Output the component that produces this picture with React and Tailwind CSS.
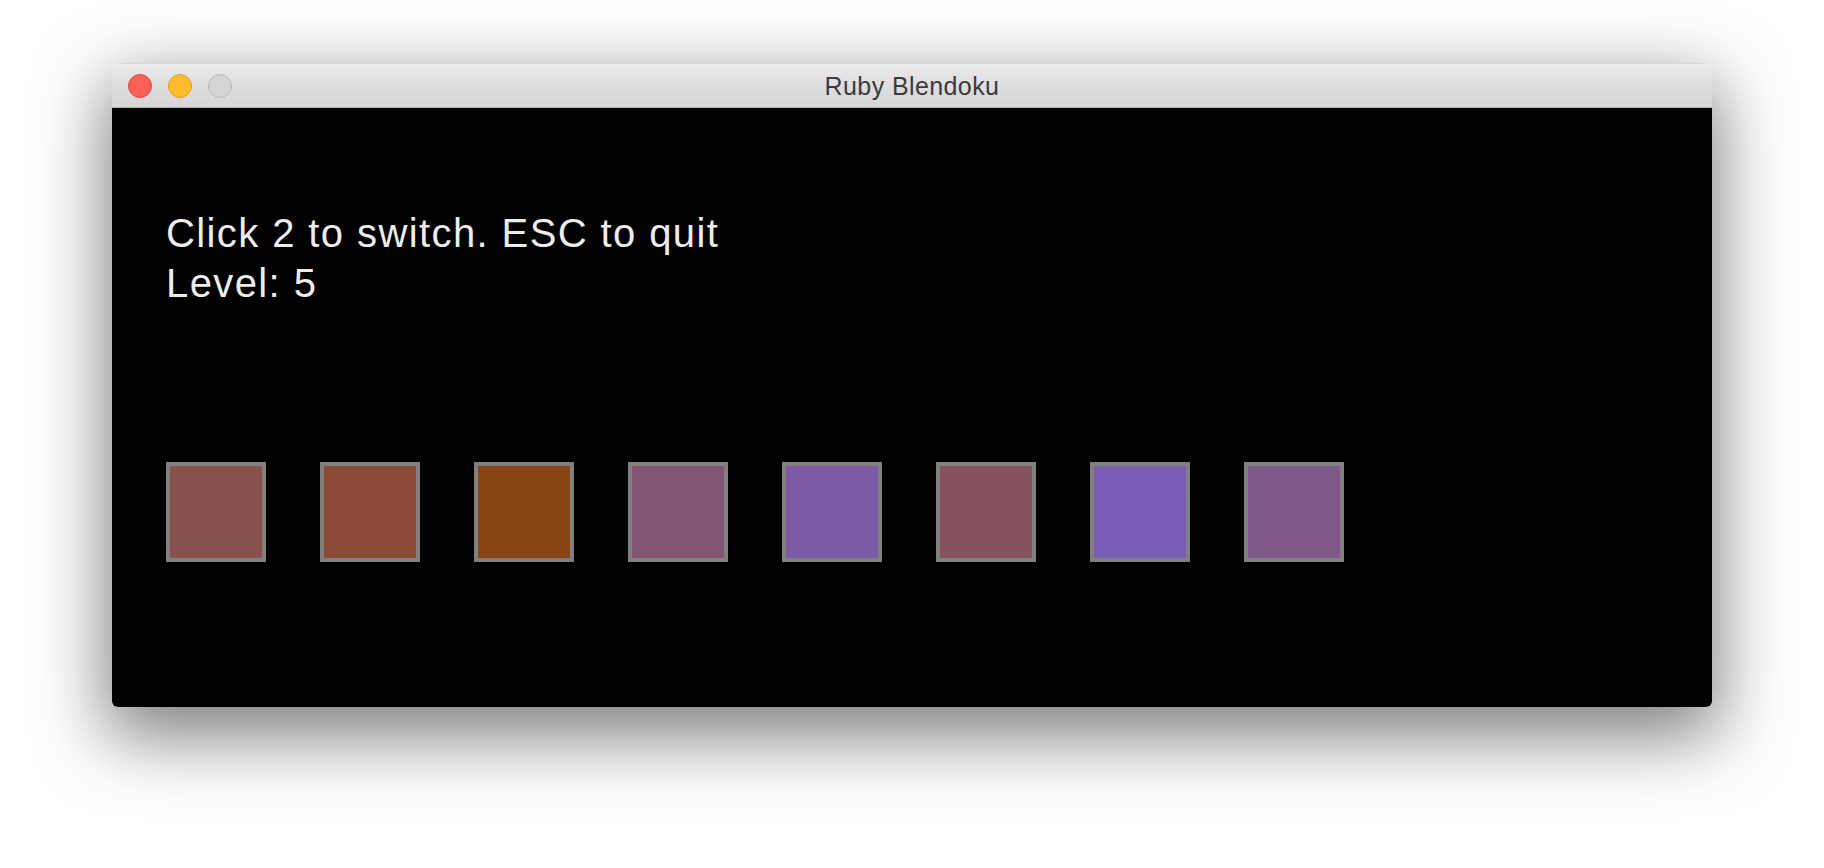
import React from 'react'

const tiles = ['#87524b', '#8b4a35', '#8b4513', '#845573', '#7d5aa6', '#86525e', '#785cb6', '#7e5687']

function TrafficLights() {
  return (
    <div className="flex items-center gap-[16px] pl-[16px]">
      <span className="block h-[24px] w-[24px] rounded-full border border-[#e0443e] bg-[#fe5f57]" />
      <span className="block h-[24px] w-[24px] rounded-full border border-[#dea123] bg-[#febc2e]" />
      <span className="block h-[24px] w-[24px] rounded-full border border-[#b8b8b8] bg-[#d4d4d4]" />
    </div>
  )
}

export default function App() {
  return (
    <div className="h-[868px] w-full overflow-hidden bg-white px-[112px] pt-[63px]" style={{ fontFamily: '"Liberation Sans", Arial, sans-serif' }}>
      <div className="w-[1600px] overflow-hidden rounded-t-[10px] rounded-b-[6px] shadow-[0_24px_70px_6px_rgba(0,0,0,0.5)]">
        <div className="relative flex h-[45px] items-center border-b border-[#b4b4b4] border-t border-t-[#d8d8d8] bg-gradient-to-b from-[#ebe9eb] to-[#d5d3d5]">
          <TrafficLights />
          <div className="absolute inset-x-0 top-0 flex h-full items-center justify-center pt-[3px] text-[25px] tracking-[0.4px] text-[#3b3b3b]">
            Ruby Blendoku
          </div>
        </div>
        <div className="h-[599px] bg-black pl-[54px] pt-[100px]">
          <div className="text-[40px] leading-[50px] tracking-[1.4px] text-[#ececec]">
            <div>Click 2 to switch. ESC to quit</div>
            <div>Level: 5</div>
          </div>
          <div className="mt-[154px] flex gap-[54px]">
            {tiles.map((c, i) => (
              <div key={i} className="h-[100px] w-[100px] border-4 border-[#808080]" style={{ backgroundColor: c }} />
            ))}
          </div>
        </div>
      </div>
    </div>
  )
}
